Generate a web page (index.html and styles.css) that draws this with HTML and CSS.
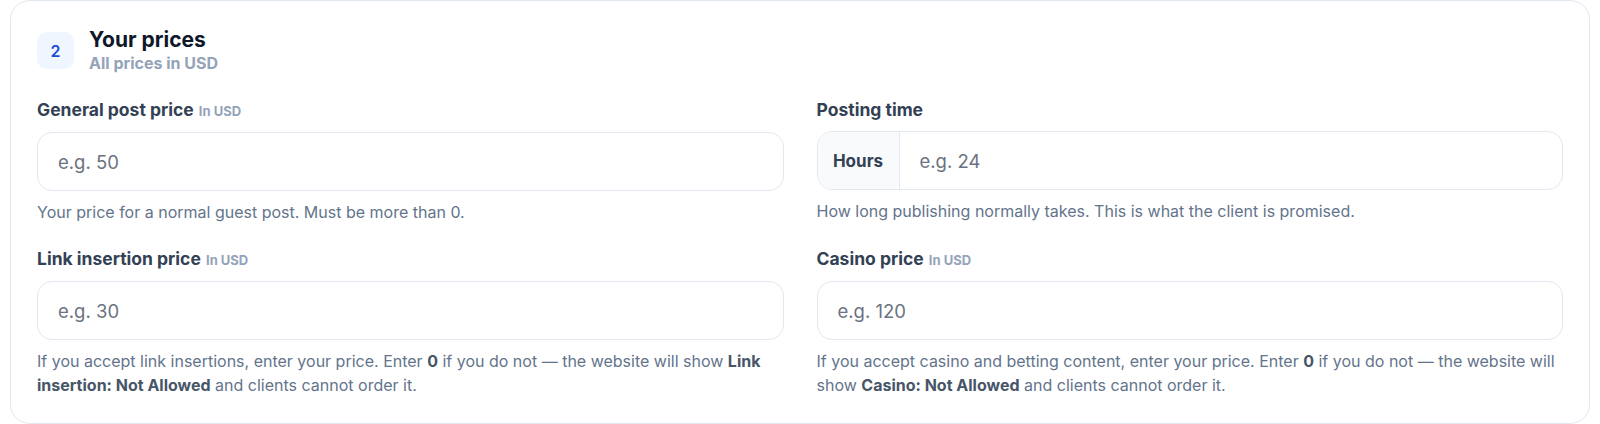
FILE: index.html
```html
<!DOCTYPE html>
<html lang="en">
<head>
<meta charset="utf-8">
<title>Your prices</title>
<link rel="stylesheet" href="styles.css">
</head>
<body>
<section class="card">
  <header class="card-head">
    <div class="step">2</div>
    <div class="head-text">
      <h2 class="title">Your prices</h2>
      <p class="subtitle">All prices in USD</p>
    </div>
  </header>
  <div class="grid">
    <div class="field">
      <label class="label">General post price <span class="unit">In USD</span></label>
      <div class="input"><input type="text" placeholder="e.g. 50"></div>
      <p class="help">Your price for a normal guest post. Must be more than 0.</p>
    </div>
    <div class="field">
      <label class="label">Posting time</label>
      <div class="input"><span class="addon">Hours</span><input type="text" placeholder="e.g. 24"></div>
      <p class="help">How long publishing normally takes. This is what the client is promised.</p>
    </div>
    <div class="field">
      <label class="label">Link insertion price <span class="unit">In USD</span></label>
      <div class="input"><input type="text" placeholder="e.g. 30"></div>
      <p class="help">If you accept link insertions, enter your price. Enter <b>0</b> if you do not — the website will show <b>Link insertion: Not Allowed</b> and clients cannot order it.</p>
    </div>
    <div class="field">
      <label class="label">Casino price <span class="unit">In USD</span></label>
      <div class="input"><input type="text" placeholder="e.g. 120"></div>
      <p class="help">If you accept casino and betting content, enter your price. Enter <b>0</b> if you do not — the website will show <b>Casino: Not Allowed</b> and clients cannot order it.</p>
    </div>
  </div>
</section>
</body>
</html>
```

FILE: styles.css
```css
* { box-sizing: border-box; }
html, body { margin: 0; padding: 0; background: #ffffff; }
body {
  font-family: Inter, "Noto Sans", "Liberation Sans", sans-serif;
  color: #334155;
  padding: 0 10px;
}
.card {
  background: #fff;
  border: 1px solid #e2e8f0;
  border-radius: 20px;
  padding: 27px 26px 24px;
  min-height: 424px;
}
.card-head {
  display: flex;
  align-items: center;
  gap: 15px;
}
.step {
  width: 37px;
  height: 37px;
  border-radius: 10px;
  background: #eff6ff;
  color: #1d4ed8;
  font-weight: 600;
  font-size: 16px;
  display: flex;
  align-items: center;
  justify-content: center;
}
.head-text { display: flex; flex-direction: column; }
.title {
  margin: 0;
  font-size: 21px;
  line-height: 24px;
  font-weight: 700;
  color: #0f172a;
}
.subtitle {
  margin: 1px 0 0;
  font-size: 16px;
  line-height: 20px;
  font-weight: 700;
  color: #94a3b8;
}
.grid {
  display: grid;
  grid-template-columns: 1fr 1fr;
  column-gap: 33px;
  row-gap: 24px;
  margin-top: 26px;
}
.field { display: flex; flex-direction: column; }
.label {
  font-size: 17.5px;
  line-height: 22px;
  font-weight: 700;
  color: #334155;
  margin-bottom: 10px;
}
.unit {
  font-size: 13px;
  font-weight: 700;
  color: #94a3b8;
  margin-left: 1px;
}
.input {
  display: flex;
  height: 59px;
  border: 1px solid #e2e8f0;
  border-radius: 15px;
  overflow: hidden;
  background: #fff;
}
.input input {
  flex: 1;
  min-width: 0;
  border: 0;
  outline: 0;
  background: transparent;
  padding: 0 20px;
  font-family: inherit;
  font-size: 18.5px;
  color: #0f172a;
}
.input input::placeholder { color: #6b7280; }
.addon {
  width: 82px;
  flex: none;
  display: flex;
  align-items: center;
  justify-content: center;
  background: #f8fafc;
  border-right: 1px solid #e2e8f0;
  font-size: 17px;
  font-weight: 700;
  color: #334155;
}
.help {
  margin: 9px 0 0;
  font-size: 16px;
  line-height: 24px;
  color: #64748b;
}
.help b { font-weight: 700; color: #475569; }
```
